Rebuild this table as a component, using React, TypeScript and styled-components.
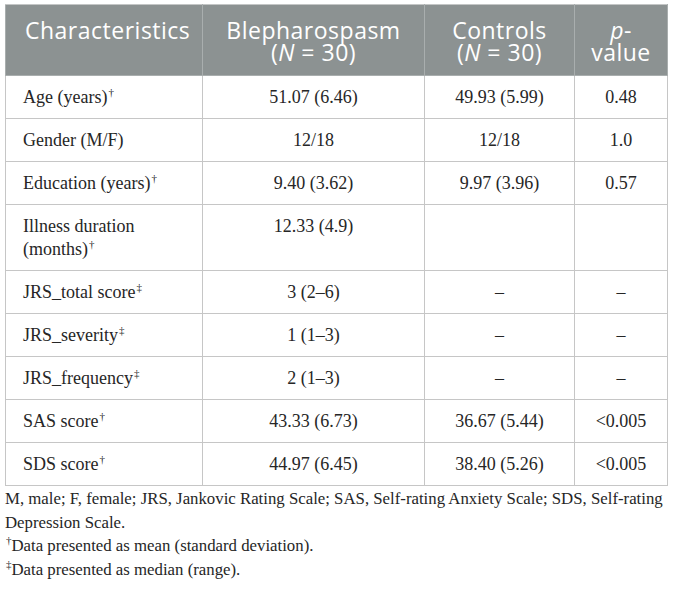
import React from 'react';
import styled, { createGlobalStyle } from 'styled-components';

const GlobalStyle = createGlobalStyle`
  html, body {
    margin: 0;
    padding: 0;
    background: #fff;
  }
`;

const Page = styled.div`
  padding: 4px 6px 0 5px;
  font-family: 'Liberation Serif', 'Times New Roman', serif;
  color: #262626;
`;

const Table = styled.table`
  width: 662px;
  border-collapse: collapse;
  table-layout: fixed;
`;

const HeadCell = styled.th<{ $align?: 'left' | 'center' }>`
  background: #8c9292;
  color: #fff;
  font-family: 'Open Sans', 'Noto Sans', sans-serif;
  font-weight: 400;
  font-size: 23px;
  letter-spacing: 0.5px;
  line-height: 22px;
  text-align: ${(p) => p.$align || 'center'};
  vertical-align: top;
  padding: 14px 6px 12px ${(p) => (p.$align === 'left' ? '19px' : '6px')};
  border: 1px solid #a9aeae;
  border-top-color: #c4c6c6;
`;

const Cell = styled.td<{ $align?: 'left' | 'center' }>`
  font-size: 18px;
  line-height: 23px;
  text-align: ${(p) => p.$align || 'center'};
  vertical-align: top;
  padding: 10px 8px 9px ${(p) => (p.$align === 'left' ? '17px' : '8px')};
  border: 1px solid #c6c6c6;
`;

const Sup = styled.span`
  position: relative;
  top: -7px;
  font-size: 11px;
  line-height: 0;
  margin-left: 1px;
`;

const Notes = styled.div`
  margin-top: 1px;
  font-size: 16.8px;
  line-height: 23.5px;
`;

const Note = styled.p`
  margin: 0;
`;

const NoBreak = styled.span`
  white-space: nowrap;
`;

interface Row {
  label: string;
  mark?: '†' | '‡';
  bleph: string;
  ctrl: string;
  p: string;
}

const rows: Row[] = [
  { label: 'Age (years)', mark: '†', bleph: '51.07 (6.46)', ctrl: '49.93 (5.99)', p: '0.48' },
  { label: 'Gender (M/F)', bleph: '12/18', ctrl: '12/18', p: '1.0' },
  { label: 'Education (years)', mark: '†', bleph: '9.40 (3.62)', ctrl: '9.97 (3.96)', p: '0.57' },
  { label: 'Illness duration (months)', mark: '†', bleph: '12.33 (4.9)', ctrl: '', p: '' },
  { label: 'JRS_total score', mark: '‡', bleph: '3 (2–6)', ctrl: '–', p: '–' },
  { label: 'JRS_severity', mark: '‡', bleph: '1 (1–3)', ctrl: '–', p: '–' },
  { label: 'JRS_frequency', mark: '‡', bleph: '2 (1–3)', ctrl: '–', p: '–' },
  { label: 'SAS score', mark: '†', bleph: '43.33 (6.73)', ctrl: '36.67 (5.44)', p: '<0.005' },
  { label: 'SDS score', mark: '†', bleph: '44.97 (6.45)', ctrl: '38.40 (5.26)', p: '<0.005' },
];

const App = () => (
  <Page>
    <GlobalStyle />
    <Table>
      <colgroup>
        <col style={{ width: 197 }} />
        <col style={{ width: 222 }} />
        <col style={{ width: 150 }} />
        <col style={{ width: 93 }} />
      </colgroup>
      <thead>
        <tr>
          <HeadCell $align="left">Characteristics</HeadCell>
          <HeadCell>
            Blepharospasm
            <br />(<i>N</i> = 30)
          </HeadCell>
          <HeadCell>
            Controls
            <br />(<i>N</i> = 30)
          </HeadCell>
          <HeadCell>
            <i>p</i>-
            <br />
            value
          </HeadCell>
        </tr>
      </thead>
      <tbody>
        {rows.map((r, i) => (
          <tr key={i}>
            <Cell $align="left">
              {r.label}
              {r.mark && <Sup>{r.mark}</Sup>}
            </Cell>
            <Cell>{r.bleph}</Cell>
            <Cell>{r.ctrl}</Cell>
            <Cell>{r.p}</Cell>
          </tr>
        ))}
      </tbody>
    </Table>
    <Notes>
      <Note>
        M, male; F, female; JRS, Jankovic Rating Scale; SAS, Self-rating Anxiety Scale; SDS,{' '}
        <NoBreak>Self-rating</NoBreak> Depression Scale.
      </Note>
      <Note>
        <Sup>†</Sup>Data presented as mean (standard deviation).
      </Note>
      <Note>
        <Sup>‡</Sup>Data presented as median (range).
      </Note>
    </Notes>
  </Page>
);

export default App;
